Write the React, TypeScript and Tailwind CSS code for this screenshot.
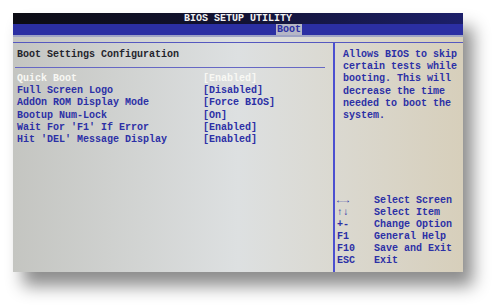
const settings = [
  { label: "Quick Boot", value: "[Enabled]", active: true },
  { label: "Full Screen Logo", value: "[Disabled]" },
  { label: "AddOn ROM Display Mode", value: "[Force BIOS]" },
  { label: "Bootup Num-Lock", value: "[On]" },
  { label: "Wait For 'F1' If Error", value: "[Enabled]" },
  { label: "Hit 'DEL' Message Display", value: "[Enabled]" },
];

const keys = [
  { key: "←→", desc: "Select Screen" },
  { key: "↑↓", desc: "Select Item" },
  { key: "+-", desc: "Change Option" },
  { key: "F1", desc: "General Help" },
  { key: "F10", desc: "Save and Exit" },
  { key: "ESC", desc: "Exit" },
];

export default function App() {
  return (
    <div className="w-[498px] h-[306px] bg-white overflow-hidden pl-[13px] pt-[13px] font-['Liberation_Mono',monospace] font-bold text-[10px]">
      <div className="w-[450px] h-[259px] flex flex-col shadow-[10px_14px_16px_rgba(0,0,0,0.45)] bg-gradient-to-r from-[#c4c5c1] via-[#dde0e1] to-[#d7cfbb]">
        {/* title */}
        <div className="h-[11px] bg-gradient-to-r from-[#0c0c14] via-[#121233] to-[#1c1f6a] text-[#f2f2f2] text-center leading-[11px]">
          BIOS SETUP UTILITY
        </div>
        {/* tabs */}
        <div className="h-[13px] bg-[#2b2fa3] flex border-b-2 border-[#9ea3c4]">
          <div className="ml-[263px] w-[26px] bg-[#b5b6c6] text-[#2b2fa3] leading-[11px] text-center">
            Boot
          </div>
        </div>
        {/* body */}
        <div className="mt-[5px] flex-1 flex border-t border-[#5558c0]">
          <div className="w-[320px] flex flex-col">
            <div className="pl-[4px] pt-[6px] h-[24px] text-[#24242c] leading-[12px]">
              Boot Settings Configuration
            </div>
            <div className="ml-[2px] mr-[8px] h-px bg-[#6668c4]"></div>
            <div className="pt-[5px] pl-[4px] leading-[12.2px]">
              {settings.map((s) => (
                <div key={s.label} className={s.active ? "flex text-[#f8f8f4]" : "flex text-[#2c30a6]"}>
                  <span className="w-[186px]">{s.label}</span>
                  <span>{s.value}</span>
                </div>
              ))}
            </div>
          </div>
          <div className="flex-1 border-l-2 border-[#4c50d0] flex flex-col justify-between pb-[5px] text-[#2c30a6]">
            <div className="pl-[8px] pt-[6px] leading-[12.2px]">
              <div>Allows BIOS to skip</div>
              <div>certain tests while</div>
              <div>booting. This will</div>
              <div>decrease the time</div>
              <div>needed to boot the</div>
              <div>system.</div>
            </div>
            <div className="pl-[2px] leading-[12px]">
              {keys.map((k) => (
                <div key={k.desc} className="flex">
                  <span className="w-[37px]">{k.key}</span>
                  <span>{k.desc}</span>
                </div>
              ))}
            </div>
          </div>
        </div>
      </div>
    </div>
  );
}
